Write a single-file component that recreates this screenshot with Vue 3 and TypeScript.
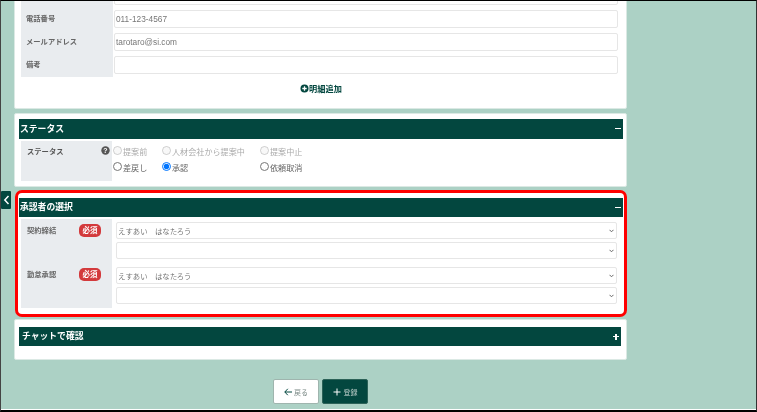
<script setup lang="ts">
const contactRows = [
  { label: '', value: '', required: true },
  { label: '電話番号', value: '011-123-4567', required: false },
  { label: 'メールアドレス', value: 'tarotaro@si.com', required: false },
  { label: '備考', value: '', required: false },
]
const statusOptions = [
  { label: '提案前', disabled: true, checked: false },
  { label: '人材会社から提案中', disabled: true, checked: false },
  { label: '提案中止', disabled: true, checked: false },
  { label: '差戻し', disabled: false, checked: false },
  { label: '承認', disabled: false, checked: true },
  { label: '依頼取消', disabled: false, checked: false },
]
const approvers = [
  { label: '契約締結', value: 'えすあい　はなたろう' },
  { label: '勤怠承認', value: 'えすあい　はなたろう' },
]
</script>

<template>
  <div class="page">
    <button class="side-tab" type="button" aria-label="閉じる">
      <svg width="7" height="10" viewBox="0 0 7 10"><path d="M5.5 1 L1.8 5 L5.5 9" fill="none" stroke="#fff" stroke-width="1.5" /></svg>
    </button>
    <div class="column">
      <section class="card card-form">
        <div v-for="row in contactRows" :key="row.label" class="form-row">
          <div class="form-label">
            <span>{{ row.label }}</span>
            <span v-if="row.required" class="badge"></span>
          </div>
          <input class="field" type="text" :value="row.value" />
        </div>
        <div class="add-row">
          <svg width="9" height="9" viewBox="0 0 9 9"><circle cx="4.5" cy="4.5" r="4" fill="#03473f" /><path d="M2.3 4.5h4.4M4.5 2.3v4.4" stroke="#fff" stroke-width="1.3" /></svg>
          <span>明細追加</span>
        </div>
      </section>

      <section class="card card-status">
        <header class="bar"><h2>ステータス</h2><span class="sign minus"></span></header>
        <div class="status-body">
          <div class="status-label">
            <span>ステータス</span>
            <svg class="help" width="9" height="9" viewBox="0 0 9 9"><circle cx="4.5" cy="4.5" r="4.2" fill="#555" /><text x="4.5" y="7" text-anchor="middle" font-size="7" font-weight="700" fill="#fff" font-family="Liberation Sans, sans-serif">?</text></svg>
          </div>
          <div class="status-options">
            <label v-for="o in statusOptions" :key="o.label" class="option" :class="{ muted: o.disabled }">
              <input type="radio" name="status" :disabled="o.disabled" :checked="o.checked" />
              <span>{{ o.label }}</span>
            </label>
          </div>
        </div>
      </section>

      <section class="card card-approver">
        <header class="bar"><h2>承認者の選択</h2><span class="sign minus"></span></header>
        <div class="approver-body">
          <div class="approver-labels">
            <div v-for="a in approvers" :key="a.label" class="approver-label">
              <span>{{ a.label }}</span>
              <span class="badge">必須</span>
            </div>
          </div>
          <div class="approver-fields">
            <div v-for="a in approvers" :key="a.label" class="approver-group">
              <div class="select-box">
                <select class="select"><option>{{ a.value }}</option></select>
                <svg class="chevron" width="5" height="4" viewBox="0 0 5 4"><path d="M.5.8 2.5 2.8 4.5.8" fill="none" stroke="#666" stroke-width="1" /></svg>
              </div>
              <div class="select-box">
                <select class="select"><option></option></select>
                <svg class="chevron" width="5" height="4" viewBox="0 0 5 4"><path d="M.5.8 2.5 2.8 4.5.8" fill="none" stroke="#666" stroke-width="1" /></svg>
              </div>
            </div>
          </div>
        </div>
      </section>

      <section class="card card-chat">
        <header class="bar"><h2>チャットで確認</h2><span class="sign plus"></span></header>
      </section>

      <div class="actions">
        <button class="btn btn-back" type="button">
          <svg width="8" height="8" viewBox="0 0 8 8"><path d="M3.8.8 .8 4l3 3.2M.8 4H8" fill="none" stroke="#03473f" stroke-width="1" /></svg>
          <span>戻る</span>
        </button>
        <button class="btn btn-save" type="button">
          <svg width="8" height="8" viewBox="0 0 8 8"><path d="M0.5 4h7M4 .5v7" stroke="#fff" stroke-width="1" /></svg>
          <span>登録</span>
        </button>
      </div>
    </div>
  </div>
</template>

<style>
html, body { margin: 0; overflow: hidden; }
</style>

<style scoped>
.page {
  position: relative;
  box-sizing: border-box;
  width: 757px;
  height: 412px;
  overflow: hidden;
  padding-left: 13px;
  background: #acd1c5;
  border-top: 1px solid #000;
  border-left: 1px solid #444;
  border-right: 1px solid #333;
  border-bottom: 2px solid #000;
  box-shadow: inset 0 -1px 0 #fff;
  font-family: "Noto Sans CJK JP", "Noto Sans", sans-serif;
  filter: blur(0.3px);
}
.column { width: 613px; margin-top: -17px; display: flex; flex-direction: column; }
.card {
  box-sizing: border-box;
  background: #fff;
  border: 1px solid #dbe9e4;
  border-radius: 2px;
}
.card-form { height: 125px; padding: 0 8px 0 6px; }
.form-row { display: grid; grid-template-columns: 92px 1fr; column-gap: 1px; height: 23px; }
.form-label {
  display: flex;
  justify-content: space-between;
  align-items: center;
  padding: 0 15px 3px 5px;
  background: #e9ecef;
  font-size: 7.3px;
  font-weight: 700;
  color: #666;
}
.field {
  box-sizing: border-box;
  width: 100%;
  height: 18px;
  margin: 2px 0 0;
  padding: 0 1px;
  border: 1px solid #e6e6e6;
  border-radius: 2px;
  background: #fff;
  font-family: "Liberation Sans", sans-serif;
  font-size: 8.3px;
  color: #777;
  outline: none;
}
.add-row {
  display: flex;
  justify-content: center;
  align-items: center;
  padding-top: 5px;
  padding-left: 3px;
  height: 12px;
  line-height: 12px;
  font-size: 8.2px;
  font-weight: 700;
  color: #03473f;
}
.card-status { height: 74px; margin-top: 4px; padding: 5px 3px 0 4px; }
.bar {
  display: flex;
  align-items: center;
  justify-content: space-between;
  box-sizing: border-box;
  height: 20px;
  padding: 0 2px 0 1px;
  background: #03473f;
  color: #fff;
}
.bar h2 { margin: 0; font-size: 8.8px; font-weight: 700; line-height: 1; }
.sign { position: relative; display: block; width: 6px; height: 6px; }
.sign::before { content: ""; position: absolute; left: 0; right: 0; top: 2px; height: 1.3px; background: #fff; }
.plus::after { content: ""; position: absolute; top: 0; bottom: 0; left: 2.4px; width: 1.3px; background: #fff; }
.status-body { display: grid; grid-template-columns: 91px 1fr; margin: 2px 0 0 2px; }
.status-label {
  display: flex;
  justify-content: space-between;
  box-sizing: border-box;
  height: 40px;
  padding: 5px 2px 0 6px;
  background: #e9ecef;
  font-size: 7.3px;
  font-weight: 700;
  color: #555;
}
.status-options {
  display: grid;
  grid-template-columns: 49px 98px 1fr;
  grid-auto-rows: 16px;
  padding: 4px 0 0 1px;
}
.option { display: flex; align-items: flex-start; gap: 1px; font-size: 8.1px; color: #666; line-height: 9px; }
.option input { width: 9px; height: 9px; margin: 1px 0 0; }
.option span { margin-top: 2px; }
.muted { color: #aaa; }
.card-approver {
  width: 612px;
  height: 127px;
  margin: 3px 0 0 1px;
  padding: 5px 1px 0;
  border: 3px solid #f00;
  border-radius: 7px;
}
.card-approver .bar { height: 19px; }
.approver-body { display: grid; grid-template-columns: 91px 1fr; column-gap: 4px; margin: 2px 0 0 2px; }
.approver-labels { height: 89px; background: #e9ecef; box-sizing: border-box; padding: 5px 11px 0 6px; }
.approver-label {
  display: flex;
  justify-content: space-between;
  height: 44px;
  font-size: 7.3px;
  font-weight: 700;
  color: #666;
  line-height: 12px;
}
.badge {
  display: block;
  box-sizing: border-box;
  width: 22px;
  height: 12.5px;
  line-height: 12.5px;
  border-radius: 5px;
  background: #d33a3c;
  color: #fff;
  font-size: 7.5px;
  font-weight: 700;
  text-align: center;
}
.approver-fields { display: flex; flex-direction: column; gap: 8px; padding: 3px 6px 0 0; }
.approver-group { display: flex; flex-direction: column; gap: 3px; }
.select-box { position: relative; }
.select {
  display: block;
  box-sizing: border-box;
  width: 100%;
  height: 17px;
  padding: 0 0 0 1px;
  border: 1px solid #e6e6e6;
  border-radius: 2px;
  background: #fff;
  appearance: none;
  font-family: "Noto Sans CJK JP", sans-serif;
  font-size: 7.4px;
  color: #777;
  outline: none;
}
.chevron { position: absolute; right: 3px; top: 7px; }
.card-chat { height: 41px; margin-top: 2px; padding: 7px 5px 0 4px; }
.card-chat .bar { height: 19px; padding: 0 2px 0 3px; }
.actions { display: flex; justify-content: center; gap: 3px; margin-top: 19px; }
.btn {
  display: flex;
  align-items: center;
  justify-content: center;
  gap: 2px;
  box-sizing: border-box;
  width: 46px;
  height: 25px;
  padding: 0;
  border-radius: 2px;
  font-family: "Noto Sans CJK JP", sans-serif;
  font-size: 7px;
}
.btn-back { background: #fff; border: 1px solid #9fb5ae; color: #7d8b88; }
.btn-save { background: #03473f; border: 1px solid #2c6258; color: #b7c9c5; gap: 3px; }
.side-tab {
  position: absolute;
  left: 0;
  top: 190px;
  display: flex;
  align-items: center;
  justify-content: center;
  width: 10px;
  height: 18px;
  padding: 0;
  border: none;
  border-radius: 1px;
  background: #03473f;
}
</style>
